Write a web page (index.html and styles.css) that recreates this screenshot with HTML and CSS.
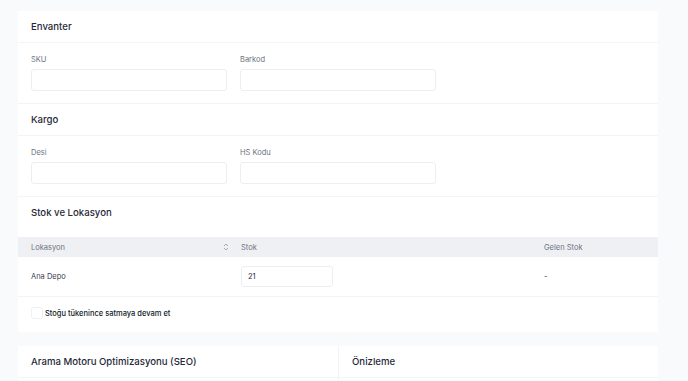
FILE: index.html
```html
<!doctype html>
<html>
    <head>
        <meta charset="utf-8">
        <meta name="viewport" content="width=device-width, initial-scale=1">
        <title>Ürün Envanter</title>
        <link rel="stylesheet" href="styles.css">
    </head>
    <body>
        <div class="page">
            <div class="card">
                <div class="card-header">
                    <h2>Envanter</h2>
                </div>
                <div class="fields">
                    <div class="field">
                        <label>SKU</label>
                        <input type="text">
                    </div>
                    <div class="field">
                        <label>Barkod</label>
                        <input type="text">
                    </div>
                </div>

                <div class="card-header">
                    <h2>Kargo</h2>
                </div>
                <div class="fields">
                    <div class="field">
                        <label>Desi</label>
                        <input type="text">
                    </div>
                    <div class="field">
                        <label>HS Kodu</label>
                        <input type="text">
                    </div>
                </div>

                <div class="card-header tall">
                    <h2>Stok ve Lokasyon</h2>
                </div>
                <div class="table">
                    <div class="table-head">
                        <div class="th sortable">
                            Lokasyon
                            <svg width="6" height="8" viewBox="0 0 6 8">
                                <path d="M1 3 L3 1 L5 3 M1 5 L3 7 L5 5" fill="none" stroke="#9ca3af" stroke-width="0.9"/>
                            </svg>
                        </div>
                        <div class="th">Stok</div>
                        <div class="th">Gelen Stok</div>
                    </div>
                    <div class="table-row">
                        <div class="td">Ana Depo</div>
                        <div class="td"><input type="text" class="stock-input" value="21"></div>
                        <div class="td">-</div>
                    </div>
                </div>
                <label class="check-row">
                    <input type="checkbox">
                    <span>Stoğu tükenince satmaya devam et</span>
                </label>
            </div>

            <div class="card split">
                <div class="col">
                    <div class="card-header">
                        <h2>Arama Motoru Optimizasyonu (SEO)</h2>
                    </div>
                </div>
                <div class="col">
                    <div class="card-header">
                        <h2>Önizleme</h2>
                    </div>
                </div>
            </div>
        </div>
    </body>
</html>
```

FILE: styles.css
```css
* {
    margin: 0;
    padding: 0;
    box-sizing: border-box;
}

body {
    background-color: #f9fafb;
    font-family: Inter, "Noto Sans", sans-serif;
    color: #111827;
}

.page {
    padding: 11px 30px 0 18px;
    display: flex;
    flex-direction: column;
    gap: 14px;
}

.card {
    background-color: #ffffff;
}

.card-header {
    padding: 5px 13px;
    border-bottom: 1px solid #f3f4f6;
}

.card-header h2 {
    font-size: 9.6px;
    font-weight: 500;
    line-height: 21px;
    color: #1f2937;
}

.card-header.tall {
    padding-bottom: 14px;
    border-bottom: none;
}

.fields {
    display: grid;
    grid-template-columns: repeat(3, 1fr);
    column-gap: 13px;
    padding: 9px 13px 12px;
    border-bottom: 1px solid #f3f4f6;
}

.field {
    display: flex;
    flex-direction: column;
    gap: 1px;
}

.field label {
    font-size: 7.5px;
    line-height: 16px;
    color: #6b7280;
}

.field input,
.stock-input {
    height: 22px;
    border: 1px solid #eceef2;
    border-radius: 3px;
    background-color: #ffffff;
    font-family: inherit;
    font-size: 7.5px;
    color: #111827;
    padding: 0 6px;
    outline: none;
}

.table-head,
.table-row {
    display: grid;
    grid-template-columns: 198px 1fr 101px;
    column-gap: 12px;
    padding: 0 13px;
    align-items: center;
}

.table-head {
    height: 20px;
    background-color: #eef0f4;
}

.th {
    font-size: 7.5px;
    color: #6b7280;
}

.th.sortable {
    display: flex;
    justify-content: space-between;
    align-items: center;
}

.table-row {
    height: 40px;
    border-bottom: 1px solid #f3f4f6;
}

.td {
    font-size: 7.5px;
    color: #374151;
}

.stock-input {
    width: 92px;
    height: 21px;
    color: #1f2937;
}

.check-row {
    display: flex;
    align-items: center;
    gap: 2px;
    padding: 10px 13px 13px;
    font-size: 7.5px;
    font-weight: 500;
    color: #111827;
}

.check-row input {
    appearance: none;
    width: 12px;
    height: 12px;
    border: 1px solid #eef0f3;
    border-radius: 3px;
    background-color: #ffffff;
}

.split {
    display: grid;
    grid-template-columns: 1fr 1fr;
    height: 60px;
}

.split .col + .col {
    border-left: 1px solid #f3f4f6;
}
```
